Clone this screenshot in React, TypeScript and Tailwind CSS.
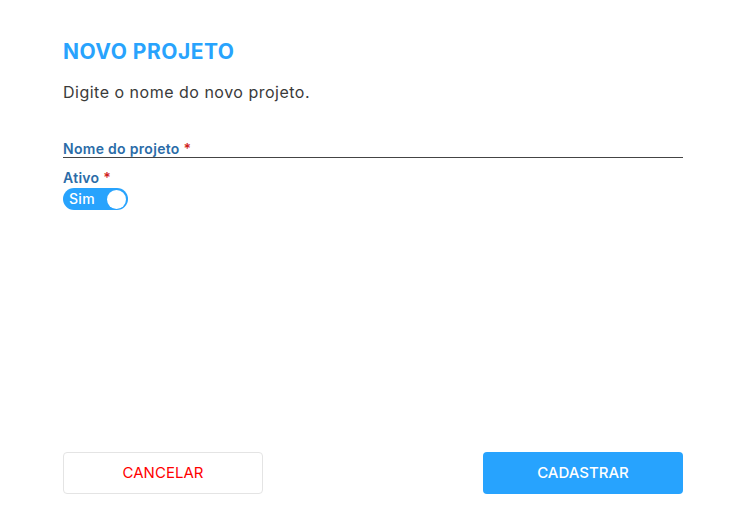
export default function App() {
  return (
    <div className="w-[734px] h-[525px] bg-white flex flex-col pl-[63px] pr-[51px] pt-[39px] pb-[31px]" style={{ fontFamily: "Inter, 'Noto Sans', sans-serif" }}>
      <h1 className="text-[21px] leading-[26px] font-bold text-[#28a3fd] tracking-[0.5px]">NOVO PROJETO</h1>
      <p className="mt-[17px] text-[16px] leading-[20px] text-[#3a3a3a] tracking-[0.5px]">Digite o nome do novo projeto.</p>

      <div className="mt-[38px] border-b border-[#444] pb-0">
        <label className="block text-[14px] leading-[17px] font-semibold text-[#2b6ca8] tracking-[0.3px]">
          Nome do projeto <span className="text-[#d0211c]">*</span>
        </label>
      </div>

      <div className="mt-[11px]">
        <div className="text-[14px] leading-[18px] font-semibold text-[#2b6ca8] tracking-[0.3px]">
          Ativo <span className="text-[#d0211c]">*</span>
        </div>
        <button className="mt-[1px] w-[65px] h-[22px] rounded-full bg-[#28a3fd] flex items-center justify-between pl-[6px] pr-[2px]">
          <span className="text-[14px] leading-none text-white font-medium tracking-[0.3px]">Sim</span>
          <span className="w-[19px] h-[19px] rounded-full bg-white"></span>
        </button>
      </div>

      <div className="mt-auto flex justify-between">
        <button className="w-[200px] h-[42px] rounded-[4px] border border-[#e4e4e4] bg-white text-[15px] text-[#ff0000]">CANCELAR</button>
        <button className="w-[200px] h-[42px] rounded-[4px] bg-[#27a3fe] text-[15px] text-white font-medium">CADASTRAR</button>
      </div>
    </div>
  );
}
